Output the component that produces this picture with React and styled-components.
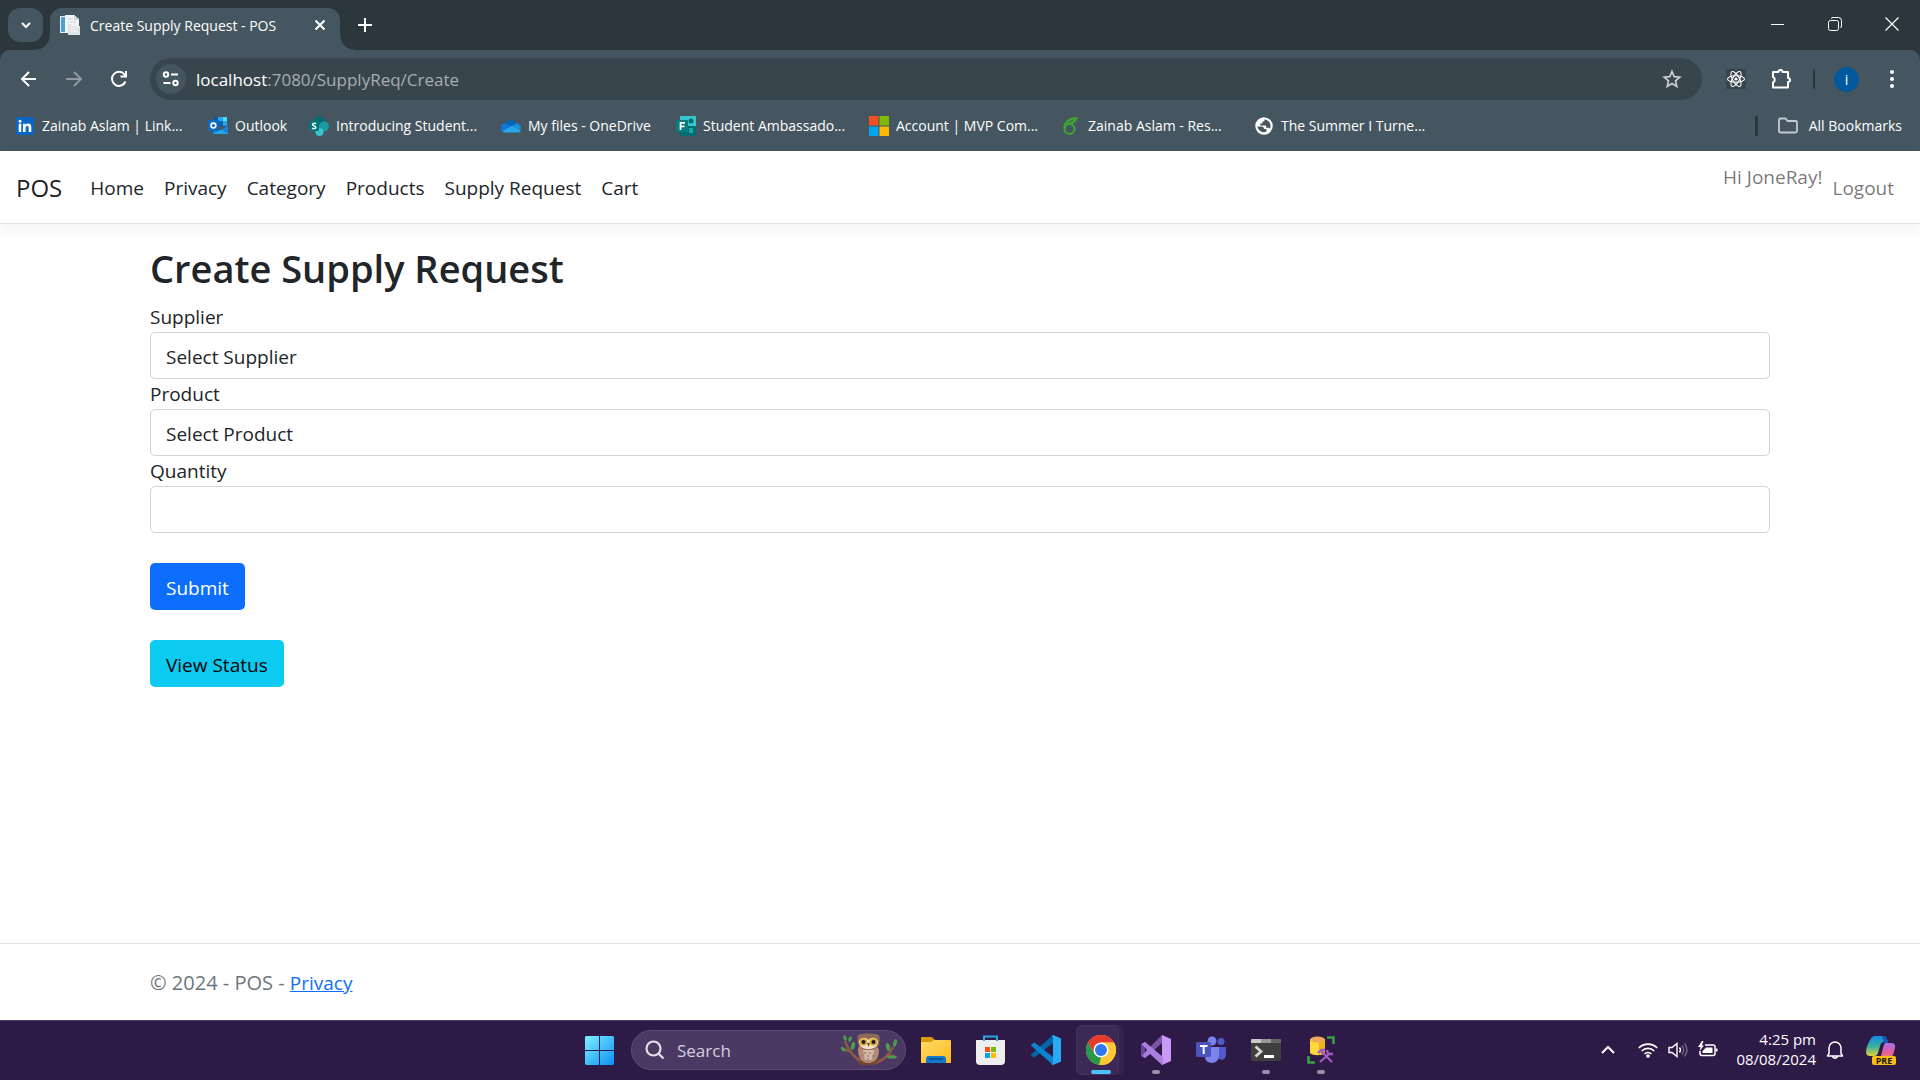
import React from "react";
import styled, { createGlobalStyle, css } from "styled-components";

const Global = createGlobalStyle`
  *, *::before, *::after { box-sizing: border-box; }
  body { margin: 0; background: #fff; }
  body, button, input, select { font-family: "Open Sans", "Noto Sans", sans-serif; }
  button { border: 0; background: none; padding: 0; color: inherit; cursor: pointer; }
  svg { display: block; flex: none; }
`;

const colors = {
  frame: "#2c373d",
  toolbar: "#455660",
  field: "#39454c",
  text: "#212529",
  taskbar: "#2d1a47",
};

const Screen = styled.div`
  min-height: 100vh;
  display: flex;
  flex-direction: column;
  background: #fff;
`;

/* ---------- Browser window ---------- */

const BrowserChrome = styled.header`
  background: ${colors.frame};
  color: #fff;
  font-size: 14px;
`;

const TabStrip = styled.div`
  display: flex;
  height: 50px;
  padding: 8px 0 0 8px;
`;

const TabSearch = styled.button`
  display: grid;
  place-items: center;
  width: 35px;
  height: 34px;
  margin-right: 7px;
  border-radius: 12px;
  background: ${colors.toolbar};
`;

const Tab = styled.div`
  position: relative;
  display: flex;
  align-items: center;
  width: 290px;
  height: 42px;
  padding: 0 10px 8px;
  border-radius: 12px 12px 0 0;
  background: ${colors.toolbar};

  &::before,
  &::after {
    content: "";
    position: absolute;
    bottom: 0;
    width: 14px;
    height: 14px;
  }
  &::before {
    right: 100%;
    background: radial-gradient(circle at 0 0, transparent 13px, ${colors.toolbar} 14px);
  }
  &::after {
    left: 100%;
    background: radial-gradient(circle at 100% 0, transparent 13px, ${colors.toolbar} 14px);
  }
`;

const TabTitle = styled.span`
  flex: 1;
  margin-left: 10px;
  white-space: nowrap;
`;

const StripButton = styled.button`
  display: grid;
  place-items: center;
  width: ${(p) => p.$width || 20}px;
  height: ${(p) => p.$height || 20}px;
`;

const NewTab = styled(StripButton)`
  margin: 2px 0 0 10px;
`;

const WindowControls = styled.div`
  display: flex;
  margin-left: auto;
  height: 32px;
`;

const Toolbar = styled.div`
  display: flex;
  align-items: center;
  height: 58px;
  padding: 0 6px;
  border-radius: 10px 10px 0 0;
  background: ${colors.toolbar};
`;

const ToolButton = styled.button`
  display: grid;
  place-items: center;
  flex: none;
  width: ${(p) => p.$width || 45}px;
  height: 42px;
  opacity: ${(p) => (p.disabled ? 0.4 : 1)};
`;

const NavButtons = styled.div`
  display: flex;
  width: 144px;
`;

const AddressBar = styled.div`
  display: flex;
  align-items: center;
  flex: 1;
  height: 42px;
  padding: 0 9px 0 6px;
  margin: 0 11px 0 0;
  border-radius: 21px;
  background: ${colors.field};
`;

const SiteInfo = styled.button`
  display: grid;
  place-items: center;
  width: 30px;
  height: 30px;
  margin-right: 10px;
  border-radius: 15px;
  background: ${colors.toolbar};
`;

const Address = styled.div`
  flex: 1;
  font-size: 17px;
  color: #a6aeb2;
  span { color: #fff; }
`;

const Divider = styled.span`
  width: ${(p) => p.$width}px;
  height: 20px;
  border-radius: 1px;
  background: ${colors.frame};
`;

const Avatar = styled.span`
  display: grid;
  place-items: center;
  width: 25px;
  height: 25px;
  border-radius: 50%;
  background: #00589f;
  font-size: 14px;
`;

const BookmarkBar = styled.nav`
  display: flex;
  align-items: center;
  height: 43px;
  padding: 0 18px 8px 15px;
  background: ${colors.toolbar};
`;

const Bookmark = styled.a`
  display: flex;
  align-items: center;
  flex: 0 0 ${(p) => p.$width || "auto"};
  gap: ${(p) => p.$gap || 7}px;
  color: #fff;
  text-decoration: none;
  white-space: nowrap;
`;

const AllBookmarks = styled.div`
  display: flex;
  align-items: center;
  gap: 19px;
  margin-left: auto;
`;

/* ---------- Web page ---------- */

const Page = styled.div`
  flex: 1;
  display: flex;
  flex-direction: column;
  color: ${colors.text};
  font-size: 19px;
  line-height: 30px;
`;

const SiteNav = styled.nav`
  display: flex;
  align-items: center;
  padding: 11px 16px;
  margin-bottom: 20px;
  border-bottom: 1px solid #dee2e6;
  box-shadow: 0 5px 15px rgba(0, 0, 0, 0.05);
`;

const Brand = styled.a`
  margin-right: 18px;
  padding-top: 2px;
  color: rgba(0, 0, 0, 0.9);
  font-size: 24px;
  text-decoration: none;
`;

const NavList = styled.ul`
  display: flex;
  margin: 0;
  padding: 0;
  list-style: none;
`;

const Account = styled(NavList)`
  margin-left: auto;
  color: rgba(0, 0, 0, 0.55);
`;

const NavLink = styled.a`
  display: block;
  padding: 11px 10px 9px;
  color: ${(p) => (p.$muted ? "rgba(0, 0, 0, 0.55)" : colors.text)};
  text-decoration: none;
`;

const Container = styled.div`
  width: 100%;
  max-width: 1650px;
  margin: 0 auto;
  padding: 0 15px;
`;

const Main = styled.main`
  flex: 1;
`;

const Title = styled.h1`
  margin: 0 0 10px;
  font-size: 38px;
  line-height: 48px;
  font-weight: 600;
`;

const Label = styled.label`
  display: block;
`;

const control = css`
  display: block;
  width: 100%;
  height: 47px;
  padding: 2px 15px 0;
  border: 1px solid #ced4da;
  border-radius: 5px;
  background: #fff;
  color: ${colors.text};
  font-size: 19px;
  line-height: 30px;
  appearance: none;
`;

const Select = styled.select`${control}`;
const Input = styled.input`${control}`;

const Actions = styled.div`
  display: flex;
  flex-direction: column;
  align-items: flex-start;
  gap: 30px;
  margin-top: 30px;
`;

const Button = styled.button`
  height: 47px;
  padding: 2px 16px 0;
  border-radius: 5px;
  background: ${(p) => (p.$info ? "#0dcaf0" : "#0d6efd")};
  color: ${(p) => (p.$info ? "#000" : "#fff")};
  font-size: 19px;
  line-height: 30px;
`;

const Footer = styled.footer`
  padding-top: 2px;
  border-top: 1px solid #dee2e6;
  color: #6c757d;
  font-size: 20px;
  line-height: 73px;
  a {
    color: #0d6efd;
    font-size: 19px;
  }
`;

/* ---------- Taskbar ---------- */

const Taskbar = styled.footer`
  display: grid;
  grid-template-columns: 1fr auto 1fr;
  align-items: center;
  height: 60px;
  box-shadow: inset 0 1px 0 #4d3e62;
  background: ${colors.taskbar};
  color: #fff;
`;

const Dock = styled.div`
  grid-column: 2;
  display: flex;
  align-items: center;
`;

const AppButton = styled.button`
  position: relative;
  display: grid;
  place-items: center;
  width: 55px;
  height: 50px;

  &::after {
    content: "";
    position: absolute;
    bottom: 1px;
    left: 50%;
    width: ${(p) => (p.$active ? 20 : 8)}px;
    height: 4px;
    border-radius: 2px;
    background: ${(p) => (p.$active ? "#4cc2ff" : "#9a8fa8")};
    transform: translateX(-50%);
    display: ${(p) => (p.$active || p.$running ? "block" : "none")};
  }
  ${(p) =>
    p.$active &&
    css`
      &::before {
        content: "";
        position: absolute;
        inset: 0 9px 0 3px;
        border: 1px solid #463359;
        border-radius: 6px;
        background: #3c2955;
        box-shadow: 5px 0 0 #35224e;
      }
      svg { position: relative; }
    `}
`;

const SearchBox = styled.label`
  display: flex;
  align-items: center;
  width: 275px;
  height: 40px;
  margin: 0 2px 0 4px;
  padding: 0 7px 0 13px;
  border: 1px solid #5f4c75;
  border-radius: 20px;
  background: #4b3863;
`;

const SearchInput = styled.input`
  flex: 1;
  min-width: 0;
  margin-left: 12px;
  padding: 0;
  border: 0;
  background: none;
  color: #fff;
  font-size: 17px;
  &::placeholder { color: #d5cfdc; opacity: 1; }
`;

const Tray = styled.div`
  display: flex;
  align-items: center;
  justify-content: flex-end;
  padding-right: 24px;
`;

const TrayButton = styled.button`
  display: grid;
  place-items: center;
  width: ${(p) => p.$width || 30}px;
  height: 40px;
`;

const Clock = styled.time`
  width: 93px;
  padding-bottom: 2px;
  text-align: right;
  font-size: 15px;
  line-height: 20px;
`;

/* ---------- Drawings ---------- */

const Stroke = ({ s = 20, box = 20, w = 2, color = "#fff", children }) => (
  <svg width={s} height={s} viewBox={`0 0 ${box} ${box}`} fill="none" stroke={color} strokeWidth={w} aria-hidden="true">
    {children}
  </svg>
);

const PageIcon = () => (
  <svg width="20" height="20" viewBox="0 0 20 20" aria-hidden="true">
    <path d="M0 1h14v17H0z" fill="#e9eef2" />
    <path d="M1 2h4v15H1z" fill="#4ea0d8" />
    <path d="M5 0h9l5 4v14H5z" fill="#f4f5f6" />
    <path d="M14 0v5h5z" fill="#cfd5d9" />
    <path d="M8 4h5M8 7h8M8 10h3" stroke="#d0d5d9" />
    <path d="M8 11h12v9H8z" fill="#dfe2e5" />
    <path d="M10 13h8M10 16h8" stroke="#f7f7f7" />
  </svg>
);

const LinkedIn = () => (
  <svg width="20" height="20" viewBox="0 0 20 20" aria-hidden="true">
    <rect x="1" y="1" width="18" height="18" rx="2" fill="#0a66c2" />
    <g fill="#fff">
      <circle cx="5" cy="5.3" r="1.5" />
      <path d="M3.7 7.8h2.6V16H3.7zM8 7.8h2.5V9c.5-.8 1.400-1.400 2.700-1.400 2.400 0 3.100 1.500 3.100 3.900V16h-2.600v-4c0-1.200-.2-2.100-1.400-2.100-1.300 0-1.700.9-1.700 2.100v4H8z" />
    </g>
  </svg>
);

const Outlook = () => (
  <svg width="20" height="20" viewBox="0 0 20 20" aria-hidden="true">
    <path d="M6 1h13v9H6z" fill="#1490df" />
    <path d="M10 1h5v4h-5z" fill="#28a8ea" /><path d="M15 1h4v4h-4z" fill="#50d9ff" /><path d="M6 1h4v4H6z" fill="#0358a7" />
    <path d="M15 5h4v4h-4z" fill="#28a8ea" /><path d="M10 5h5v5h-5z" fill="#0364b8" />
    <path d="M5 10l7.500 5L20 9v9H5z" fill="#1784d9" />
    <path d="M5 18l8-4.500 7 4.500z" fill="#28a8ea" />
    <path d="M0 4h11v11H0z" fill="#0f6cbd" />
    <circle cx="5.400" cy="9.500" r="2.400" fill="none" stroke="#fff" strokeWidth="1.600" />
  </svg>
);

const SharePoint = () => (
  <svg width="20" height="20" viewBox="0 0 20 20" aria-hidden="true">
    <circle cx="10" cy="5.500" r="5.500" fill="#036c70" />
    <circle cx="15" cy="10.500" r="5" fill="#1a9ba1" />
    <circle cx="10.500" cy="16" r="4" fill="#37c6d0" />
    <rect y="5" width="10" height="10" rx="1" fill="#03787c" />
    <path d="M7 7.800C5.800 7 3.500 7.200 3.500 8.500 3.500 10.200 6.800 9.400 6.800 11.400 6.800 12.900 4.300 13 3.100 12.200" fill="none" stroke="#fff" strokeWidth="1.400" />
  </svg>
);

const OneDrive = () => (
  <svg width="20" height="20" viewBox="0 0 20 20" aria-hidden="true">
    <path d="M4 8a6.500 6.500 0 0 1 11.500-.5L10 12z" fill="#0364b8" />
    <path d="M4.500 7.500L12 11l-9 5.500A4.500 4.500 0 0 1 4.500 7.500z" fill="#0f78d4" />
    <path d="M11 10l4.500-2.500A4.600 4.600 0 0 1 19.500 14z" fill="#1490df" />
    <path d="M1.500 15L11 10l8.700 4.200c-.5 1.600-1.700 2.300-3.700 2.300H5c-1.600 0-2.800-.5-3.500-1.500z" fill="#28a8ea" />
  </svg>
);

const Forms = () => (
  <svg width="20" height="20" viewBox="0 0 20 20" aria-hidden="true">
    <path d="M4 0h16v10H4z" fill="#37c6d0" /><path d="M4 10h16v10H4z" fill="#026d71" />
    <circle cx="15" cy="5" r="2.500" fill="#036c70" /><path d="M13 12h4v5h-4z" fill="#1aa5aa" />
    <rect y="4" width="12" height="12" rx="1" fill="#077b80" />
    <path d="M4.500 14V6.800h4.500M4.500 10.300h4" fill="none" stroke="#fff" strokeWidth="1.700" />
  </svg>
);

const Microsoft = () => (
  <svg width="20" height="20" viewBox="0 0 20 20" aria-hidden="true">
    <path d="M0 0h9.500v9.500H0z" fill="#f25022" /><path d="M10.500 0H20v9.500h-9.500z" fill="#7fba00" />
    <path d="M0 10.500h9.500V20H0z" fill="#00a4ef" /><path d="M10.500 10.500H20V20h-9.500z" fill="#ffb900" />
  </svg>
);

const Resume = () => (
  <Stroke color="#3da535" w={2.2}>
    <circle cx="8.500" cy="13" r="5" />
    <path d="M3.500 12C4 6 8 2.500 15.500 2.200 14.800 5.500 12 6.500 7 8" />
  </Stroke>
);

const Globe = () => (
  <svg width="20" height="20" viewBox="0 0 24 24" fill="#fff" aria-hidden="true">
    <path d="M12 1.500a10.500 10.500 0 1 0 0 21 10.500 10.500 0 0 0 0-21zM4 12.500h5c2 0 3 1 3 3h3v3.200A7.800 7.800 0 0 1 4 12.500zm8.500-8.300V6.500H10V9H7.500v2.500h7V14h3c.8 0 1.500.7 1.500 1.500A7.800 7.800 0 0 0 12.500 4.200z" fillRule="evenodd" />
  </svg>
);

const ReactMark = () => (
  <svg width="20" height="20" viewBox="0 0 20 20" fill="none" stroke="#fff" strokeWidth="1.100" aria-hidden="true">
    <path d="M0 0h20v20H0z" fill={colors.field} stroke="none" />
    <ellipse cx="10" cy="10" rx="8.500" ry="3.300" />
    <ellipse cx="10" cy="10" rx="8.500" ry="3.300" transform="rotate(60 10 10)" />
    <ellipse cx="10" cy="10" rx="8.500" ry="3.300" transform="rotate(120 10 10)" />
    <circle cx="10" cy="10" r="1.600" fill="#fff" stroke="none" />
  </svg>
);

const WindowsLogo = () => (
  <svg width="29" height="29" viewBox="0 0 29 29" aria-hidden="true">
    <defs>
      <linearGradient id="win" x1="0" y1="0" x2="1" y2="1">
        <stop offset="0" stopColor="#7ff0ff" /><stop offset="1" stopColor="#0a8ff5" />
      </linearGradient>
    </defs>
    <path d="M1 0h13v14H0V1zM15 0h13l1 1v13H15zM0 15h14v14H1l-1-1zM15 15h14v13l-1 1H15z" fill="url(#win)" />
  </svg>
);

const Owl = () => (
  <svg width="57" height="34" viewBox="0 0 57 34" aria-hidden="true">
    <path d="M4 8c3 9 9 17 18 21 11 4 23-1 30-15M8 18l-6-2M45 22l9 1" fill="none" stroke="#8b5a44" strokeWidth="2.500" />
    <path d="M17 28c8-2 18 0 24-4l-8 8H18z" fill="#74462f" />
    <g fill="#4f9b4f">
      <ellipse cx="4" cy="5" rx="1.500" ry="3" transform="rotate(-25 4 5)" />
      <ellipse cx="9" cy="6" rx="1.500" ry="3" transform="rotate(25 9 6)" />
      <ellipse cx="12" cy="13" rx="2" ry="4" transform="rotate(15 12 13)" />
      <ellipse cx="2" cy="16" rx="1.500" ry="3" transform="rotate(-50 2 16)" />
      <ellipse cx="47" cy="14" rx="2" ry="4" transform="rotate(-15 47 14)" />
      <ellipse cx="54" cy="10" rx="1.700" ry="4" transform="rotate(15 54 10)" />
      <ellipse cx="51" cy="24" rx="5" ry="1.600" />
    </g>
    <path d="M17 16c0 9 4 14 10 14 7 0 11-5 11-13L34 8H20z" fill="#b38a78" />
    <path d="M22 17h11l-2 10h-7z" fill="#d4b9a6" />
    <path d="M23 20h2m3 0h2m-4 3h2m3 0h2m-7 3h2" stroke="#806052" />
    <path d="M17 2c4-2 16-2 21 0 1 4 1 9-1 12-4 4-15 4-18 0-3-3-3-8-2-12z" fill="#8d6a58" />
    <path d="M18 8c2-4 7-4 9.500-1C30 4 35 4 37 8c0 6-4 8-9.500 8S18 14 18 8z" fill="#f3e2c8" />
    <circle cx="22.500" cy="9" r="3.800" fill="#dcae2c" /><circle cx="32.500" cy="9" r="3.800" fill="#dcae2c" />
    <circle cx="22.500" cy="9" r="2" fill="#1d1a1c" /><circle cx="32.500" cy="9" r="2" fill="#1d1a1c" />
    <path d="M26 10h3l-1.500 4z" fill="#5f4a40" />
  </svg>
);

const Explorer = () => (
  <svg width="30" height="28" viewBox="0 0 30 28" aria-hidden="true">
    <defs>
      <linearGradient id="folder" x1="0" y1="0" x2="1" y2="1">
        <stop offset="0" stopColor="#ffdc6b" /><stop offset="1" stopColor="#ffb91a" />
      </linearGradient>
    </defs>
    <path d="M0 2q0-1 1-1h9q1 0 2 1l2 2v8H0z" fill="#d99a06" />
    <path d="M0 6h10l3-2h16q1 0 1 1v22H0z" fill="url(#folder)" />
    <path d="M5 27v-4q0-3 3-3h14q3 0 3 3v4z" fill="#1379c8" /><path d="M8 23h14" stroke="#064f8c" strokeWidth="1.500" />
  </svg>
);

const Store = () => (
  <svg width="29" height="30" viewBox="0 0 29 30" aria-hidden="true">
    <path d="M0 5h29v21q0 4-4 4H4q-4 0-4-4z" fill="#eeeeee" />
    <path d="M8 6V1.500h13V6" fill="none" stroke="#25a9e0" strokeWidth="2" />
    <path d="M9 12h5v5H9z" fill="#f25022" /><path d="M15 12h5v5h-5z" fill="#7fba00" />
    <path d="M9 18h5v5H9z" fill="#00a4ef" /><path d="M15 18h5v5h-5z" fill="#ffb900" />
  </svg>
);

const VSCode = () => (
  <svg width="30" height="30" viewBox="0 0 30 30" aria-hidden="true">
    <path d="M22 0v8L3.500 22.500 0 20.500v-1z" fill="#0065a9" />
    <path d="M22 30v-8L3.500 7.500 0 9.500v1z" fill="#0b84cd" />
    <path d="M22 0l8 3.500v23L22 30l-1.500-1 1.500-1V2l-1.500-1z" fill="#29aaf4" />
  </svg>
);

const Chrome = () => (
  <svg width="30" height="30" viewBox="0 0 30 30" aria-hidden="true">
    <circle cx="15" cy="15" r="15" fill="#fcc934" />
    <path d="M2 7.500A15 15 0 0 1 28 7.500H15L8.500 18.800z" fill="#e33b2e" />
    <path d="M2 7.500A15 15 0 0 0 15 30l6.500-11.200h-13z" fill="#279847" />
    <path d="M28 7.500H15v15l-2 7.400A15 15 0 0 0 28 7.500z" fill="#fcc934" />
    <circle cx="15" cy="15" r="7.500" fill="#fff" /><circle cx="15" cy="15" r="6" fill="#3078ef" />
  </svg>
);

const VisualStudio = () => (
  <svg width="30" height="30" viewBox="0 0 30 30" aria-hidden="true">
    <path d="M0 9l4-2v16l-4-2z" fill="#68479b" />
    <path d="M4 23L21 8V0L9 12z" fill="#7a55aa" />
    <path d="M4 7l17 17v6L9 19 4 23l-3-2 5-6-5-6z" fill="#a87be0" />
    <path d="M21 0l9 4v22l-9 4z" fill="#c99af5" />
    <path d="M4 7l18 15v8L1 9z" fill="#aa80dc" />
  </svg>
);

const Teams = () => (
  <svg width="30" height="28" viewBox="0 0 30 28" aria-hidden="true">
    <circle cx="25" cy="5.500" r="3.500" fill="#5059c9" /><path d="M21 11h9v8c0 4-4 6-7 4z" fill="#5059c9" />
    <circle cx="16" cy="5" r="4.500" fill="#7b83eb" /><path d="M9 11h14v9c0 9-14 9-14 1z" fill="#7b83eb" />
    <rect y="6" width="15" height="15" rx="1.500" fill="#4b53bc" />
    <path d="M4 10h7.500M7.700 10v8" stroke="#fff" strokeWidth="2" />
  </svg>
);

const Terminal = () => (
  <svg width="30" height="24" viewBox="0 0 30 24" aria-hidden="true">
    <rect y="1" width="30" height="22" rx="1.500" fill="#3f3f40" />
    <path d="M0 5V2q0-1 1-1h9v4z" fill="#c8c8c8" /><path d="M10 1h10v4H10z" fill="#999" /><path d="M20 1h9q1 0 1 1v3H20z" fill="#676767" />
    <path d="M4.500 8.500l5.500 5-5.500 5" fill="none" stroke="#d5d5d5" strokeWidth="2.800" /><path d="M13 18.500h10" stroke="#fff" strokeWidth="3" />
  </svg>
);

const Ssms = () => (
  <svg width="28" height="28" viewBox="0 0 28 28" aria-hidden="true">
    <path d="M3 3h15v14c-3 3-12 3-15 0z" fill="#ffd83b" /><path d="M12 3h6v14l-6 2z" fill="#edb51d" />
    <ellipse cx="10.500" cy="3.500" rx="7.500" ry="3" fill="#f3a95c" />
    <path d="M20 1.500h6.500V8M1.500 20v6.500H8" fill="none" stroke="#3a9e45" strokeWidth="2.600" />
    <path d="M13 26l10-9M25 26L14 15M11 17l3-3 4 0M20 14l1 4 5 0" fill="none" stroke="#a45bc4" strokeWidth="2.300" />
  </svg>
);

const Wifi = () => (
  <Stroke w={1.7}>
    <path d="M.8 8a13 13 0 0 1 18.400 0M3.700 11a9 9 0 0 1 12.600 0M6.600 14a5 5 0 0 1 6.800 0" />
    <circle cx="10" cy="16" r="1" fill="#fff" />
  </Stroke>
);

const Speaker = () => (
  <Stroke w={1.4}>
    <path d="M1 7.500h3L9 3.500v13l-5-4H1z" />
    <path d="M11.500 7.500q2 2.500 0 5" />
    <path d="M14 5.500q3.500 4.500 0 9M16.500 3.500q5 6.500 0 13" stroke="#756884" />
  </Stroke>
);

const Battery = () => (
  <svg width="20" height="20" viewBox="0 0 20 20" fill="none" stroke="#fff" strokeWidth="1.500" aria-hidden="true">
    <path d="M7 5h8q2 0 2 2v6.500q0 2-2 2H4q-2 0-2-2V11" />
    <path d="M8 7.500h6.500v5.500H4.500V11z" fill="#fff" stroke="none" />
    <path d="M18 8.500h1.500v3H18z" fill="#fff" stroke="none" />
    <path d="M4 1L0 7h2.500L1.500 11 6 5.500H3.800L5.500 1z" fill="#fff" stroke="none" />
  </svg>
);

const CopilotWrap = styled.button`
  position: relative;
  margin-left: 12px;
  width: 30px;
  height: 30px;
`;

const Badge = styled.span`
  position: absolute;
  right: 0;
  bottom: 0;
  width: 24px;
  border-radius: 2px;
  background: #f9be11;
  color: #1c1404;
  font-size: 9px;
  font-weight: 700;
  line-height: 9px;
  text-align: center;
`;

const Copilot = () => (
  <svg width="30" height="30" viewBox="0 0 30 30" aria-hidden="true">
    <defs>
      <linearGradient id="copA" x1="0" y1="0" x2="0" y2="1">
        <stop offset="0" stopColor="#1589e6" /><stop offset=".5" stopColor="#35b0a0" /><stop offset="1" stopColor="#e5cf3b" />
      </linearGradient>
      <linearGradient id="copB" x1="0" y1="0" x2="0" y2="1">
        <stop offset="0" stopColor="#a56fe8" /><stop offset=".5" stopColor="#e45ea0" /><stop offset="1" stopColor="#f58a4a" />
      </linearGradient>
    </defs>
    <path d="M9 1h9q2 0 3 3l1 3h-4q-3 0-4 4l-2 7q-1 3-4 3H4q-4 0-4-4 0-5 4-12 2-4 5-4z" fill="url(#copA)" />
    <path d="M19 8h6q5 0 4 5-1 6-4 10-2 3-5 3h-9q3-1 4-5l2-8q1-4 2-5z" fill="url(#copB)" />
    <path d="M16 1h2q2 0 3 3l1 4h-4z" fill="#1b54b8" />
  </svg>
);

/* ---------- Data ---------- */

const bookmarks = [
  { label: "Zainab Aslam | Link...", icon: LinkedIn, width: "193px" },
  { label: "Outlook", icon: Outlook, width: "101px" },
  { label: "Introducing Student...", icon: SharePoint, width: "192px" },
  { label: "My files - OneDrive", icon: OneDrive, width: "175px" },
  { label: "Student Ambassado...", icon: Forms, width: "193px" },
  { label: "Account | MVP Com...", icon: Microsoft, width: "192px" },
  { label: "Zainab Aslam - Res...", icon: Resume, width: "193px" },
  { label: "The Summer I Turne...", icon: Globe, width: "192px" },
];

const navItems = ["Home", "Privacy", "Category", "Products", "Supply Request", "Cart"];

const apps = [
  { name: "File Explorer", icon: Explorer },
  { name: "Microsoft Store", icon: Store },
  { name: "Visual Studio Code", icon: VSCode },
  { name: "Google Chrome", icon: Chrome, active: true },
  { name: "Visual Studio", icon: VisualStudio, running: true },
  { name: "Microsoft Teams", icon: Teams },
  { name: "Terminal", icon: Terminal, running: true },
  { name: "SQL Server Management Studio", icon: Ssms, running: true },
];

/* ---------- Sections ---------- */

function Browser() {
  return (
    <BrowserChrome>
      <TabStrip>
        <TabSearch aria-label="Search tabs">
          <Stroke s={12} box={12}><path d="M2 4l4 4 4-4" /></Stroke>
        </TabSearch>
        <Tab>
          <PageIcon />
          <TabTitle>Create Supply Request - POS</TabTitle>
          <StripButton aria-label="Close tab">
            <Stroke s={12} box={12}><path d="M1.500 1.500l9 9M10.500 1.500l-9 9" /></Stroke>
          </StripButton>
        </Tab>
        <NewTab aria-label="New tab" $width={30} $height={30}>
          <Stroke s={14} box={14}><path d="M7 0v14M0 7h14" /></Stroke>
        </NewTab>
        <WindowControls>
          <StripButton aria-label="Minimize" $width={57} $height={32}>
            <Stroke s={14} box={14} w={1}><path d="M0 7.500h13" /></Stroke>
          </StripButton>
          <StripButton aria-label="Restore" $width={57} $height={32}>
            <Stroke s={14} box={14} w={1}>
              <rect x=".5" y="3.500" width="10" height="10" rx="2" />
              <path d="M3 1.500Q4 .5 5 .5h5.500q3 0 3 3V9q0 1-1 2" />
            </Stroke>
          </StripButton>
          <StripButton aria-label="Close" $width={57} $height={32}>
            <Stroke s={14} box={14} w={1.2}><path d="M.5.500l13 13M13.500.500l-13 13" /></Stroke>
          </StripButton>
        </WindowControls>
      </TabStrip>
      <Toolbar>
        <NavButtons>
          <ToolButton aria-label="Back"><Stroke><path d="M17 10H3.500M10 3l-7 7 7 7" /></Stroke></ToolButton>
          <ToolButton aria-label="Forward" disabled><Stroke><path d="M2 10h14.500M10 3l7 7-7 7" /></Stroke></ToolButton>
          <ToolButton aria-label="Reload">
            <Stroke><path d="M16.500 12.500a7 7 0 1 1-1-7L17 7.500M17 2v5.500h-5.500" /></Stroke>
          </ToolButton>
        </NavButtons>
        <AddressBar>
          <SiteInfo aria-label="Site information">
            <Stroke s={18} box={18}>
              <circle cx="4" cy="4.500" r="2.200" /><path d="M9 4.500h7M1.500 13h7" /><circle cx="13.500" cy="13" r="2.200" />
            </Stroke>
          </SiteInfo>
          <Address><span>localhost</span>:7080/SupplyReq/Create</Address>
          <ToolButton aria-label="Bookmark this tab" $width={42}>
            <Stroke w={1.7} color="#c9ced1">
              <path d="M10 2.500l2.200 5.200 5.600.5-4.300 3.700 1.300 5.500L10 14.500l-4.800 2.900 1.300-5.500L2.200 8.200l5.600-.5z" />
            </Stroke>
          </ToolButton>
        </AddressBar>
        <ToolButton aria-label="React Developer Tools"><ReactMark /></ToolButton>
        <ToolButton aria-label="Extensions">
          <Stroke s={22} box={22}>
            <path d="M3 4h5.500a2 2 0 0 1 4 0H18v6a2 2 0 0 1 0 4v5.500H3v-5a3 3 0 0 0 0-5.500z" strokeLinejoin="round" />
          </Stroke>
        </ToolButton>
        <ToolButton as="span" $width={21}><Divider $width={2} /></ToolButton>
        <ToolButton aria-label="Profile"><Avatar>i</Avatar></ToolButton>
        <ToolButton aria-label="Menu">
          <svg width="20" height="20" viewBox="0 0 20 20" fill="#fff" aria-hidden="true">
            <circle cx="10" cy="3" r="2" /><circle cx="10" cy="10" r="2" /><circle cx="10" cy="17" r="2" />
          </svg>
        </ToolButton>
      </Toolbar>
      <BookmarkBar aria-label="Bookmarks">
        {bookmarks.map(({ label, icon: Icon, width }) => (
          <Bookmark key={label} href="#" $width={width}><Icon />{label}</Bookmark>
        ))}
        <AllBookmarks>
          <Divider $width={3} />
          <Bookmark href="#" $gap={10}>
            <Stroke s={22} box={22} w={1.8} color="#c4cacd">
              <path d="M2 5q0-1.500 1.500-1.500h5l2 2.500h8q1.500 0 1.500 1.500V16q0 1.500-1.500 1.500h-15Q2 17.500 2 16z" />
            </Stroke>
            All Bookmarks
          </Bookmark>
        </AllBookmarks>
      </BookmarkBar>
    </BrowserChrome>
  );
}

function SupplyPage() {
  return (
    <Page>
      <SiteNav>
        <Brand href="#">POS</Brand>
        <NavList>
          {navItems.map((item) => (
            <li key={item}><NavLink href="#">{item}</NavLink></li>
          ))}
        </NavList>
        <Account>
          <li>Hi JoneRay!</li>
          <li><NavLink href="#" $muted>Logout</NavLink></li>
        </Account>
      </SiteNav>
      <Main>
        <Container>
          <Title>Create Supply Request</Title>
          <form onSubmit={(e) => e.preventDefault()}>
            <Label htmlFor="supplier">Supplier</Label>
            <Select id="supplier"><option>Select Supplier</option></Select>
            <Label htmlFor="product">Product</Label>
            <Select id="product"><option>Select Product</option></Select>
            <Label htmlFor="quantity">Quantity</Label>
            <Input id="quantity" type="text" inputMode="numeric" />
            <Actions>
              <Button type="submit">Submit</Button>
              <Button type="button" $info>View Status</Button>
            </Actions>
          </form>
        </Container>
      </Main>
      <Footer>
        <Container>© 2024 - POS - <a href="#">Privacy</a></Container>
      </Footer>
    </Page>
  );
}

function SystemTaskbar() {
  return (
    <Taskbar>
      <Dock>
        <AppButton aria-label="Start"><WindowsLogo /></AppButton>
        <SearchBox>
          <Stroke w={2.2} color="#e4e0e8"><circle cx="8.500" cy="8.500" r="7" /><path d="M13.500 13.500l5 5" /></Stroke>
          <SearchInput type="text" placeholder="Search" aria-label="Search" />
          <Owl />
        </SearchBox>
        {apps.map(({ name, icon: Icon, active, running }) => (
          <AppButton key={name} aria-label={name} $active={active} $running={running}><Icon /></AppButton>
        ))}
      </Dock>
      <Tray>
        <TrayButton aria-label="Show hidden icons" $width={50}>
          <Stroke s={14} box={14}><path d="M1 10l6-6 6 6" /></Stroke>
        </TrayButton>
        <TrayButton aria-label="Network"><Wifi /></TrayButton>
        <TrayButton aria-label="Volume"><Speaker /></TrayButton>
        <TrayButton aria-label="Battery"><Battery /></TrayButton>
        <Clock>4:25 pm<br />08/08/2024</Clock>
        <TrayButton aria-label="Notifications" $width={38}>
          <Stroke w={1.5}><path d="M4 13.500V8a6 6 0 0 1 12 0v5.500l1.500 2.500h-15zM7.500 16.500q2.500 3.500 5 0" strokeLinejoin="round" /></Stroke>
        </TrayButton>
        <CopilotWrap aria-label="Copilot"><Copilot /><Badge>PRE</Badge></CopilotWrap>
      </Tray>
    </Taskbar>
  );
}

export default function App() {
  return (
    <>
      <Global />
      <Screen>
        <Browser />
        <SupplyPage />
        <SystemTaskbar />
      </Screen>
    </>
  );
}
